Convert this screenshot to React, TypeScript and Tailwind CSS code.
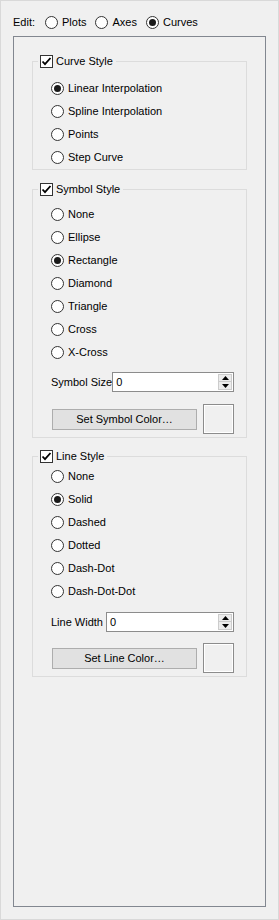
import type { ReactNode } from 'react';

const font = 'font-["Segoe_UI","Liberation_Sans",Arial,sans-serif] text-[11px] whitespace-nowrap';

function Radio({ label, checked }: { label: string; checked?: boolean }) {
  return (
    <div className="flex items-center h-[23px]">
      <span className="w-[13px] h-[13px] rounded-full border border-[#333333] bg-white flex items-center justify-center shrink-0">
        {checked && <span className="w-[7px] h-[7px] rounded-full bg-[#1a1a1a]" />}
      </span>
      <span className="ml-[4px] text-black leading-none">{label}</span>
    </div>
  );
}

function Checkbox() {
  return (
    <span className="w-[13px] h-[13px] border border-[#333333] bg-white flex items-center justify-center shrink-0">
      <svg width="11" height="11" viewBox="0 0 11 11">
        <path d="M1.5 5.5 L4 8.2 L9.5 2" fill="none" stroke="#000" strokeWidth="1.8" />
      </svg>
    </span>
  );
}

function Group({ title, className, children }: { title: string; className: string; children: ReactNode }) {
  return (
    <div className={`border border-[#dcdcdc] flex flex-col ${className}`}>
      <div className="-mt-[7px] ml-[5px] pl-[2px] pr-[3px] h-[13px] w-fit flex items-center gap-[3px] bg-[#f0f0f0]">
        <Checkbox />
        <span className="leading-none text-black">{title}</span>
      </div>
      {children}
    </div>
  );
}

function SpinBox({ width, label }: { width: string; label: string }) {
  return (
    <div className="flex items-center pl-[18px] pr-[12px] h-[20px]">
      <span className="text-black leading-none shrink-0">{label}</span>
      <div className={`ml-auto shrink-0 h-[20px] border border-[#8c8c8c] bg-white flex items-center ${width}`}>
        <span className="pl-[3px] pt-[1px] text-black leading-none">0</span>
        <div className="ml-auto mr-[1px] w-[14px] h-[16px] flex flex-col">
          <div className="h-[8px] border border-[#cccccc] bg-[#ececec] flex items-center justify-center">
            <svg width="7" height="4" viewBox="0 0 7 4">
              <path d="M0 4 L3.5 0 L7 4 Z" fill="#000" />
            </svg>
          </div>
          <div className="h-[8px] border border-t-0 border-[#cccccc] bg-[#ececec] flex items-center justify-center">
            <svg width="7" height="4" viewBox="0 0 7 4">
              <path d="M0 0 L3.5 4 L7 0 Z" fill="#000" />
            </svg>
          </div>
        </div>
      </div>
    </div>
  );
}

function ColorRow({ label, className }: { label: string; className: string }) {
  return (
    <div className={`flex items-center pl-[19px] pr-[12px] ${className}`}>
      <button className="w-[145px] h-[21px] border border-[#adadad] bg-[#e1e1e1] text-black leading-none">
        {label}
      </button>
      <div className="ml-auto w-[31px] h-[30px] border border-[#8c8c8c]">
        <div className="w-full h-full border border-white bg-[#f0f0f0]" />
      </div>
    </div>
  );
}

export default function App() {
  return (
    <div className={`w-[279px] h-[920px] border border-[#d9d9d9] bg-[#f0f0f0] flex flex-col ${font}`}>
      <div className="mt-[11px] h-[21px] pl-[12px] flex items-center">
        <span className="text-black leading-none">Edit:</span>
        <div className="ml-[10px] flex items-center gap-[9px]">
          <Radio label="Plots" />
          <Radio label="Axes" />
          <Radio label="Curves" checked />
        </div>
      </div>

      <div className="mt-[3px] mx-[12px] mb-[12px] flex-1 border border-[#828790] px-[18px] pt-[24px]">
        <Group title="Curve Style" className="pb-0">
          <div className="mt-[9px] pl-[18px]">
            <Radio label="Linear Interpolation" checked />
            <Radio label="Spline Interpolation" />
            <Radio label="Points" />
            <Radio label="Step Curve" />
          </div>
        </Group>

        <Group title="Symbol Style" className="mt-[19px] pb-[3px]">
          <div className="mt-[7px] pl-[18px]">
            <Radio label="None" />
            <Radio label="Ellipse" />
            <Radio label="Rectangle" checked />
            <Radio label="Diamond" />
            <Radio label="Triangle" />
            <Radio label="Cross" />
            <Radio label="X-Cross" />
          </div>
          <div className="mt-[8px]">
            <SpinBox label="Symbol Size" width="w-[122px]" />
          </div>
          <ColorRow label="Set Symbol Color…" className="mt-[12px]" />
        </Group>

        <Group title="Line Style" className="mt-[18px] pb-[3px]">
          <div className="mt-[2px] pl-[18px]">
            <Radio label="None" />
            <Radio label="Solid" checked />
            <Radio label="Dashed" />
            <Radio label="Dotted" />
            <Radio label="Dash-Dot" />
            <Radio label="Dash-Dot-Dot" />
          </div>
          <div className="mt-[9px]">
            <SpinBox label="Line Width" width="w-[128px]" />
          </div>
          <ColorRow label="Set Line Color…" className="mt-[11px]" />
        </Group>
      </div>
    </div>
  );
}
